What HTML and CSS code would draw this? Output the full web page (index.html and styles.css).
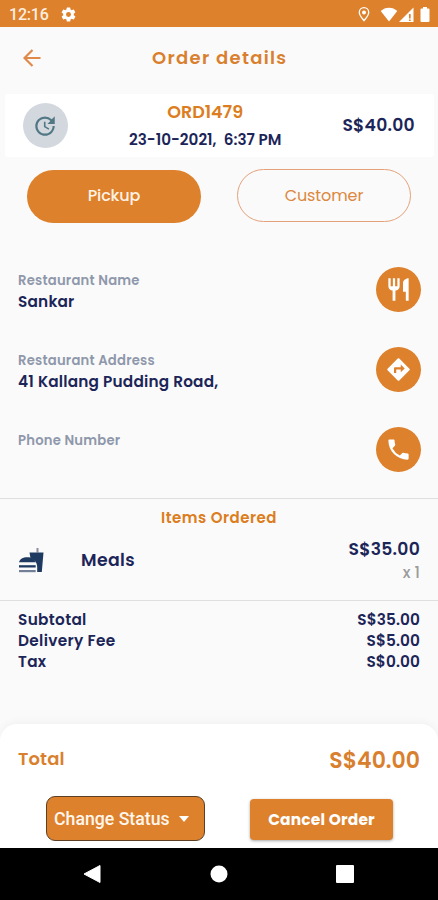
FILE: index.html
```html
<!DOCTYPE html>
<html lang="en">
<head>
<meta charset="utf-8">
<title>Order details</title>
<link rel="stylesheet" href="styles.css">
</head>
<body>
<div class="screen">
  <div class="statusbar">
    <span class="clock">12:16</span>
    <svg class="gear" viewBox="0 0 24 24" width="17" height="17"><path d="M19.4 13a7.500 7.500 0 0 0 0-2l2.100-1.650a.5.5 0 0 0 .12-.64l-2-3.460a.5.5 0 0 0-.61-.22l-2.490 1a7.300 7.300 0 0 0-1.690-.98l-.38-2.650A.5.5 0 0 0 14 2h-4a.5.5 0 0 0-.49.42l-.38 2.650c-.61.25-1.170.59-1.690.98l-2.490-1a.5.5 0 0 0-.61.22l-2 3.460a.5.5 0 0 0 .12.64L4.570 11a8 8 0 0 0 0 2l-2.110 1.650a.5.5 0 0 0-.12.64l2 3.460c.12.22.39.3.61.22l2.490-1c.52.4 1.080.73 1.690.98l.38 2.650c.03.24.24.4.49.4h4c.25 0 .46-.18.49-.42l.38-2.650c.61-.25 1.170-.59 1.690-.98l2.490 1c.23.09.49 0 .61-.22l2-3.460a.5.5 0 0 0-.12-.64zM12 15.500a3.500 3.500 0 1 1 0-7 3.500 3.500 0 0 1 0 7z"/></svg>
    <div class="signals">
      <svg viewBox="0 0 12 15" width="12" height="15"><path d="M6 13.700C3.800 10.800 1.300 8.200 1.300 5.400a4.700 4.700 0 0 1 9.400 0c0 2.800-2.500 5.400-4.700 8.300z" fill="none" stroke="#fff" stroke-width="1.300"/><circle cx="6" cy="5.500" r="2"/></svg>
      <svg class="wifi" viewBox="0 0 18 15" width="18" height="15"><path d="M9 14.500.7 4C3 1.900 5.800.7 9 .7S15 1.900 17.300 4z"/></svg>
      <svg class="cell" viewBox="0 0 15 15" width="15" height="15"><path d="M0 15 14.500.5V15z"/><path d="M10.800 7v4.500m0 1v1.500" stroke="#dd812c" stroke-width="1.700"/></svg>
      <svg class="battery" viewBox="0 0 10 15" width="10" height="15"><path d="M3 0h4v1.500h1.500q1 0 1 1V14q0 1-1 1h-7q-1 0-1-1V2.500q0-1 1-1H3z"/></svg>
    </div>
  </div>

  <header class="appbar">
    <svg viewBox="0 0 18 18" width="18" height="18"><path d="M17.500 9H1.500M9.500 1 1.500 9l8 8" fill="none" stroke="#df8a4a" stroke-width="2.200"/></svg>
    <h1 class="title">Order details</h1>
  </header>

  <section class="order">
    <div class="avatar">
      <svg viewBox="0 0 24 24" width="26" height="26"><path d="M21 10.120h-6.780l2.740-2.820c-2.730-2.700-7.150-2.800-9.880-.1a6.875 6.875 0 0 0 0 9.790 7.020 7.020 0 0 0 9.880 0C18.320 15.650 19 14.080 19 12.100h2c0 1.980-.88 4.550-2.640 6.290-3.510 3.480-9.210 3.480-12.720 0-3.500-3.470-3.530-9.110-.02-12.580a8.987 8.987 0 0 1 12.650 0L21 3zM12.500 8v4.250l3.500 2.080-.72 1.210L11 13V8z"/></svg>
    </div>
    <div class="order-main">
      <div class="order-id">ORD1479</div>
      <div class="order-date">23-10-2021,&nbsp; 6:37 PM</div>
    </div>
    <div class="order-price">S$40.00</div>
  </section>

  <div class="tabs">
    <div class="tab tab-active"><span>Pickup</span></div>
    <div class="tab tab-outline"><span>Customer</span></div>
  </div>

  <section class="details">
    <div class="detail">
      <div><div class="label">Restaurant Name</div><div class="value">Sankar</div></div>
      <div class="action"><svg viewBox="0 0 24 24" width="27" height="27"><path d="M11 9H9V2H7v7H5V2H3v7c0 2.120 1.660 3.840 3.750 3.970V22h2.500v-9.030C11.340 12.840 13 11.120 13 9V2h-2zm5-3v8h2.500v8H21V2c-2.760 0-5 2.240-5 4z"/></svg></div>
    </div>
    <div class="detail">
      <div><div class="label">Restaurant Address</div><div class="value">41 Kallang Pudding Road,</div></div>
      <div class="action"><svg viewBox="0 0 24 24" width="27" height="27"><path d="m21.710 11.290-9-9a1 1 0 0 0-1.410 0l-9 9a1 1 0 0 0 0 1.410l9 9c.39.39 1.020.39 1.410 0l9-9a1 1 0 0 0 0-1.410zM14 14.500V12h-4v3H8v-4c0-.55.45-1 1-1h5V7.500l3.500 3.500z"/></svg></div>
    </div>
    <div class="detail">
      <div><div class="label">Phone Number</div></div>
      <div class="action"><svg viewBox="0 0 24 24" width="27" height="27"><path d="M6.620 10.790a15.050 15.050 0 0 0 6.590 6.590l2.200-2.200a1 1 0 0 1 1.020-.24c1.120.37 2.330.57 3.570.57.55 0 1 .45 1 1V20c0 .55-.45 1-1 1C10.610 21 3 13.390 3 4c0-.55.45-1 1-1h3.500c.55 0 1 .45 1 1 0 1.250.2 2.450.57 3.570a1 1 0 0 1-.25 1.020z"/></svg></div>
    </div>
  </section>

  <section class="items">
    <h2 class="items-title">Items Ordered</h2>
    <div class="item">
      <svg class="food" viewBox="0 0 26 26" width="26" height="26"><path d="M18.500 0h2v4.500h-2z" fill="#8a8f9b"/><path d="M11.500 4.500h14L23.800 24h-4.600v-5c0-4-2.500-7.500-6.700-8.700z"/><path d="M1 14.300c.6-3.300 4-5.100 8.300-5.100s7.700 1.800 8.300 5.100z"/><path d="M1 17.200h16.700v2.300H1z"/><path d="M1 22h16.700v2.200H1z" fill="#737f96"/></svg>
      <span class="item-name">Meals</span>
      <div class="item-cost"><div class="item-price">S$35.00</div><div class="item-qty">x 1</div></div>
    </div>
  </section>

  <section class="sums">
    <div class="sum"><span>Subtotal</span><span class="amt">S$35.00</span></div>
    <div class="sum"><span>Delivery Fee</span><span class="amt">S$5.00</span></div>
    <div class="sum"><span>Tax</span><span class="amt">S$0.00</span></div>
  </section>

  <footer class="footer">
    <div class="total"><span class="total-label">Total</span><span class="total-value">S$40.00</span></div>
    <div class="buttons">
      <div class="status-btn"><span>Change Status</span><i class="caret"></i></div>
      <div class="cancel-btn"><span>Cancel Order</span></div>
    </div>
  </footer>

  <nav class="navbar">
    <svg viewBox="0 0 18 20" width="18" height="20"><path d="M17 1.500v17L1 10z" stroke="#fff" stroke-linejoin="round"/></svg>
    <svg viewBox="0 0 18 18" width="18" height="18"><circle cx="9" cy="9" r="8.500"/></svg>
    <svg viewBox="0 0 18 18" width="18" height="18"><rect width="18" height="18" rx="1"/></svg>
  </nav>
</div>
</body>
</html>
```
FILE: styles.css
```css
* { box-sizing: border-box; }
body { margin: 0; background: #fafafa; font-family: Poppins, Inter, "Open Sans", sans-serif; font-weight: 600; color: #1c2558; }
h1, h2 { margin: 0; }
svg { display: block; flex: none; fill: #fff; }
span, .order-id, .order-date, .order-price, .label, .value { white-space: nowrap; }
.screen { width: 438px; height: 900px; display: flex; flex-direction: column; overflow: hidden; background: #fafafa; }

.statusbar { height: 27px; flex: none; background: #dd812c; display: flex; align-items: center; padding: 1px 8px 0 9px; color: #fff; }
.clock { font: 500 16px/20px Roboto, sans-serif; width: 51px; padding-top: 1px; letter-spacing: -.2px; color: #fdeee0; }
.signals { margin-left: auto; display: flex; align-items: center; }
.wifi { margin-left: 10px; }
.cell { margin-left: 1px; }
.battery { margin-left: 6px; }

.appbar { height: 67px; flex: none; display: flex; align-items: center; padding: 0 0 5px 23px; }
.title { margin-left: 111px; font-size: 18px; font-weight: 600; line-height: 24px; letter-spacing: 1.300px; color: #d9802f; }

.order { height: 63px; flex: none; margin: 0 4px 0 5px; padding: 0 19px 0 18px; background: #fff; display: flex; align-items: center; justify-content: space-between; border-radius: 3px; }
.avatar { width: 45px; height: 45px; border-radius: 50%; background: #d3d8de; display: grid; place-items: center; }
.avatar svg { fill: #527885; margin-right: 2px; }
.order-main { text-align: center; }
.order-id { font-size: 17.500px; line-height: 28px; color: #dc7d20; }
.order-date { font-size: 15.200px; line-height: 28px; }
.order-price { font-size: 17.200px; letter-spacing: .25px; margin-top: -2px; }

.tabs { flex: none; display: flex; gap: 36px; padding: 12px 0 0 27px; }
.tab { width: 174px; height: 53px; border-radius: 27px; display: grid; place-items: center; font-size: 16px; font-weight: 500; }
.tab-active { background: #dd812c; color: #fff3e6; margin-top: 1px; padding-bottom: 2px; letter-spacing: -.15px; }
.tab-outline { border: 1px solid #e5a27a; color: #dc8840; font-weight: 400; letter-spacing: -.1px; }

.details { flex: none; padding: 44px 18px 0; height: 275px; }
.detail { height: 80px; display: flex; justify-content: space-between; align-items: flex-start; }
.label { font-size: 13.200px; letter-spacing: .22px; line-height: 20px; margin-top: 4px; color: #8f98ab; }
.value { font-size: 15.300px; letter-spacing: .2px; line-height: 21px; }
.action { width: 45px; height: 45px; border-radius: 50%; background: #dd812c; display: grid; place-items: center; margin-right: -1px; }

.items { flex: none; height: 103px; border-top: 1px solid #dedede; border-bottom: 1px solid #dedede; padding: 7px 18px 0; }
.items-title { font-size: 15px; font-weight: 600; letter-spacing: .5px; line-height: 24px; text-align: center; color: #dc7d20; }
.item { display: flex; align-items: center; height: 60px; }
.food { fill: #1f3a61; margin-top: 2px; }
.item-name { font-size: 17.300px; letter-spacing: .4px; margin-left: 37px; }
.item-cost { margin-left: auto; text-align: right; }
.item-price { font-size: 17.200px; letter-spacing: .25px; line-height: 24px; }
.item-qty { font-size: 15.500px; line-height: 23px; color: #9b9b9b; font-weight: 500; }

.sums { flex: none; height: 123px; padding: 8px 18px 0; }
.sum { display: flex; justify-content: space-between; font-size: 15.300px; letter-spacing: .33px; line-height: 21px; }
.amt { letter-spacing: .1px; }

.footer { flex: none; height: 124px; background: #fff; border-radius: 17px 17px 0 0; box-shadow: 0 -2px 8px rgba(0,0,0,.04); padding: 20px 18px 0; }
.total { display: flex; justify-content: space-between; align-items: center; color: #d9802f; font-size: 18px; line-height: 32px; }
.total-label { margin-top: -3px; letter-spacing: .1px; }
.total-value { font-size: 22px; margin-top: 1px; }
.buttons { display: flex; align-items: center; margin: 19px 0 0 28px; color: #fff6ec; }
.status-btn { width: 159px; height: 45px; border: 1px solid #5d4023; border-radius: 9px; background: #dd812c; display: flex; align-items: center; padding-left: 7px; font: 500 17.700px/24px Roboto, sans-serif; }
.caret { margin-left: 9px; border: 5.500px solid transparent; border-top: 6px solid #fff; border-bottom: 0; }
.cancel-btn { width: 143px; height: 41px; margin: 1px 0 0 45px; border-radius: 4px; background: #dd812c; box-shadow: 0 1px 3px rgba(0,0,0,.35); display: grid; place-items: center; font-size: 15.400px; letter-spacing: .2px; font-weight: 700; color: #fff; }

.navbar { flex: none; height: 52px; background: #000; display: flex; align-items: center; justify-content: space-between; padding: 0 84px 0 83px; }
```
